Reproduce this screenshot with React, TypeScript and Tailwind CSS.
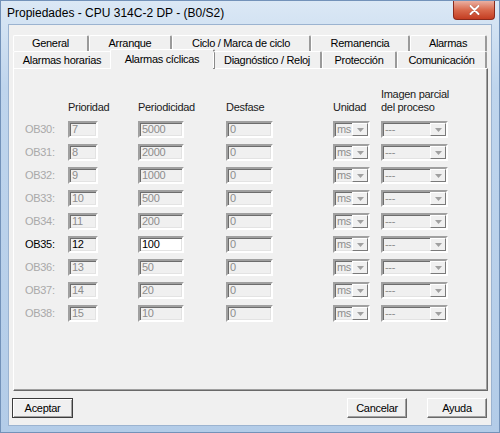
import React from 'react';

type Row = { ob: string; pri: string; per: string; active?: boolean };

const rows: Row[] = [
  { ob: 'OB30', pri: '7', per: '5000' },
  { ob: 'OB31', pri: '8', per: '2000' },
  { ob: 'OB32', pri: '9', per: '1000' },
  { ob: 'OB33', pri: '10', per: '500' },
  { ob: 'OB34', pri: '11', per: '200' },
  { ob: 'OB35', pri: '12', per: '100', active: true },
  { ob: 'OB36', pri: '13', per: '50' },
  { ob: 'OB37', pri: '14', per: '20' },
  { ob: 'OB38', pri: '15', per: '10' },
];

const backTabs = [
  { label: 'General', w: 'w-[76px]' },
  { label: 'Arranque', w: 'w-[83px]' },
  { label: 'Ciclo / Marca de ciclo', w: 'w-[139px]' },
  { label: 'Remanencia', w: 'w-[99px]' },
  { label: 'Alarmas', w: 'w-[77px]' },
];

const frontTabs = [
  { label: 'Alarmas horarias', w: 'w-[99px]' },
  { label: 'Alarmas cíclicas', w: 'w-[105px]', selected: true },
  { label: 'Diagnóstico / Reloj', w: 'w-[109px]' },
  { label: 'Protección', w: 'w-[75px]' },
  { label: 'Comunicación', w: 'w-[90px]' },
];

const sunken =
  'border-2 border-t-[#a0a0a0] border-l-[#a0a0a0] border-b-white border-r-white shadow-[inset_1px_1px_0_#6d6d6d,inset_-1px_-1px_0_#e3e3e3]';

function Field({ value, w, white, dark }: { value: string; w: string; white?: boolean; dark?: boolean }) {
  return (
    <div
      className={`${w} h-[17px] ${sunken} ${white ? 'bg-white' : 'bg-[#f0f0f0]'} ${
        dark ? 'text-black' : 'text-[#8d8d8d]'
      } flex items-center pl-[2px] leading-none`}
    >
      {value}
    </div>
  );
}

function Combo({ value, w }: { value: string; w: string }) {
  return (
    <div className={`${w} h-[17px] ${sunken} bg-[#f0f0f0] text-[#8d8d8d] flex items-stretch leading-none`}>
      <div className="flex-1 flex items-center pl-[2px]">{value}</div>
      <div className="w-[16px] border border-t-white border-l-white border-r-[#7a7a7a] border-b-[#7a7a7a] flex items-center justify-center">
        <svg width="7" height="4" viewBox="0 0 7 4">
          <path d="M0 0 H7 L3.5 4 Z" fill="#a0a0a0" />
        </svg>
      </div>
    </div>
  );
}

export default function App() {
  return (
    <div className="w-[500px] h-[433px] flex flex-col bg-[linear-gradient(to_bottom,#dbe8f5,#bfd5ed_20%,#b3cce8)] border border-[#7392b9] font-['Liberation_Sans',Arial,sans-serif] text-[11px] text-black overflow-hidden">
      {/* Title bar */}
      <div className="relative h-[23px] shrink-0 flex items-center pl-[6px]">
        <span className="text-[12px]">Propiedades - CPU 314C-2 DP - (B0/S2)</span>
        <div className="absolute top-0 right-[4px] w-[42px] h-[19px] rounded-b-[4px] border border-t-0 border-[#8b2a1c] bg-[linear-gradient(to_bottom,#eab0a2,#d9694c_50%,#c33d22)] flex items-center justify-center">
          <svg width="11" height="10" viewBox="0 0 11 10">
            <path d="M1.5 1 L9.5 9 M9.5 1 L1.5 9" stroke="#5a1a10" strokeWidth="3" strokeLinecap="round" opacity="0.35" />
            <path d="M1.5 1 L9.5 9 M9.5 1 L1.5 9" stroke="#ffffff" strokeWidth="2" strokeLinecap="round" />
          </svg>
        </div>
      </div>

      {/* Client area */}
      <div className="mx-[7px] h-[402px] shrink-0 bg-[#f0f0f0] border border-[#9bb3d0] pl-[4px] pr-[3px] pt-[10px] flex flex-col tracking-[-0.3px]">
        {/* Tabs */}
        <div className="flex h-[16px]">
          {backTabs.map((t) => (
            <div
              key={t.label}
              className={`${t.w} h-[16px] flex items-center justify-center border-t border-l border-white border-r-2 border-r-[#9a9a9a] rounded-t-[2px]`}
            >
              {t.label}
            </div>
          ))}
        </div>
        <div className="flex h-[17px] relative z-10">
          {frontTabs.map((t) =>
            t.selected ? (
              <div
                key={t.label}
                className={`${t.w} -mx-[2px] -mt-[2px] h-[20px] bg-[#f0f0f0] flex items-center justify-center border-t border-l border-white border-r-2 border-r-[#8a8a8a] rounded-t-[2px]`}
              >
                {t.label}
              </div>
            ) : (
              <div
                key={t.label}
                className={`${t.w} h-[17px] flex items-center justify-center border-t border-l border-white border-r-2 border-r-[#9a9a9a] rounded-t-[2px]`}
              >
                {t.label}
              </div>
            )
          )}
        </div>

        {/* Tab page */}
        <div className="w-[475px] h-[323px] border border-t-white border-l-white border-r-[#696969] border-b-[#696969] shadow-[inset_-1px_-1px_0_#a0a0a0] pt-[19px] pl-[11px]">
          <div className="grid grid-cols-[43px_70px_88px_107px_48px_67px] items-end leading-[13px] text-[#1a1a1a] whitespace-nowrap">
            <div />
            <div>Prioridad</div>
            <div>Periodicidad</div>
            <div>Desfase</div>
            <div>Unidad</div>
            <div>
              Imagen parcial
              <br />
              del proceso
            </div>
          </div>

          <div className="mt-[4px] flex flex-col">
            {rows.map((r) => (
              <div key={r.ob} className="grid grid-cols-[43px_70px_88px_107px_48px_67px] h-[23px] items-center">
                <div className={r.active ? 'text-black' : 'text-[#a9a9a9]'}>{r.ob}:</div>
                <Field value={r.pri} w="w-[30px]" dark={r.active} />
                <Field value={r.per} w="w-[46px]" white={r.active} dark={r.active} />
                <Field value="0" w="w-[47px]" />
                <Combo value="ms" w="w-[37px]" />
                <Combo value="---" w="w-[67px]" />
              </div>
            ))}
          </div>
        </div>

        {/* Buttons */}
        <div className="mt-[7px] flex items-center h-[20px] pr-[1px]">
          <button className="ml-[-1px] w-[61px] h-[20px] border border-[#3c3c3c] shadow-[inset_1px_1px_0_#ffffff,inset_-1px_-1px_0_#a0a0a0] bg-[#f0f0f0]">
            Aceptar
          </button>
          <div className="flex-1" />
          <button className="w-[60px] h-[20px] border border-t-white border-l-white border-r-[#696969] border-b-[#696969] shadow-[inset_-1px_-1px_0_#a0a0a0] bg-[#f0f0f0]">
            Cancelar
          </button>
          <button className="ml-[20px] w-[60px] h-[20px] border border-t-white border-l-white border-r-[#696969] border-b-[#696969] shadow-[inset_-1px_-1px_0_#a0a0a0] bg-[#f0f0f0]">
            Ayuda
          </button>
        </div>
      </div>
    </div>
  );
}
